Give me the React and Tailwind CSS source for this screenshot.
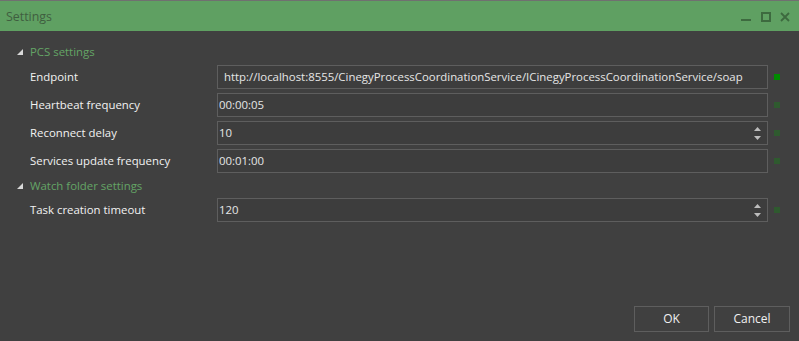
import React from 'react';

const font = { fontFamily: '"Open Sans", "Noto Sans", sans-serif' };

const Triangle = () => (
  <svg width="6" height="6" viewBox="0 0 6 6" className="mr-[7px]">
    <polygon points="6,0 6,6 0,6" fill="#d8d8d8" />
  </svg>
);

const Spinner = () => (
  <div className="flex flex-col items-center gap-[5px] mr-[6px]">
    <svg width="7" height="4" viewBox="0 0 7 4"><polygon points="3.5,0 7,4 0,4" fill="#bdbdbd" /></svg>
    <svg width="7" height="4" viewBox="0 0 7 4"><polygon points="0,0 7,0 3.5,4" fill="#bdbdbd" /></svg>
  </div>
);

const Row = ({ label, value, spin, pad, active }) => (
  <div className="flex items-center h-[28px]">
    <div className="w-[217px] pl-[30px] text-[11.4px] text-[#f2f2f2]">{label}</div>
    <div className="w-[551px] h-[24px] border border-[#5e5e5e] bg-[#3d3d3d] flex items-center">
      <span className={`flex-1 text-[11.4px] text-[#e6e6e6] ${pad ? 'pl-[6px]' : 'pl-[1px]'}`}>{value}</span>
      {spin && <Spinner />}
    </div>
    <div className={`ml-[6px] w-[6px] h-[6px] ${active ? 'bg-[#008a00]' : 'bg-[#2f5a2f]'}`} />
  </div>
);

const Header = ({ children, short }) => (
  <div className={`flex items-center pl-[17px] ${short ? 'h-[21px]' : 'h-[22px]'}`}>
    <Triangle />
    <span className="text-[11.4px] text-[#64a566]">{children}</span>
  </div>
);

export default function App() {
  return (
    <div style={font} className="w-[799px] h-[341px] bg-[#404040] flex flex-col border-t border-[#707070] overflow-hidden">
      {/* Title bar */}
      <div className="h-[30px] bg-[#5fa062] flex items-center justify-between px-[6px] pt-[2px]">
        <span className="text-[12.4px] text-[#3f5e40]">Settings</span>
        <div className="flex items-center gap-[9px] pr-[3px]">
          <svg width="11" height="11" viewBox="0 0 11 11"><rect x="0" y="7" width="10" height="2" fill="#3d6a3f" /></svg>
          <svg width="10" height="10" viewBox="0 0 10 10"><rect x="1" y="1" width="8" height="8" fill="none" stroke="#3d6a3f" strokeWidth="2" /></svg>
          <svg width="10" height="10" viewBox="0 0 10 10"><path d="M1 1 L9 9 M9 1 L1 9" stroke="#3d6a3f" strokeWidth="1.8" /></svg>
        </div>
      </div>

      {/* Content */}
      <div className="flex-1 flex flex-col pt-[10px]">
        <Header>PCS settings</Header>
        <Row label="Endpoint" value="http://localhost:8555/CinegyProcessCoordinationService/ICinegyProcessCoordinationService/soap" pad active />
        <Row label="Heartbeat frequency" value="00:00:05" />
        <Row label="Reconnect delay" value="10" spin />
        <Row label="Services update frequency" value="00:01:00" />
        <Header short>Watch folder settings</Header>
        <Row label="Task creation timeout" value="120" spin />
      </div>

      {/* Buttons */}
      <div className="flex justify-end gap-[5px] pr-[9px] pb-[9px]">
        <button className="w-[75px] h-[26px] border border-[#5e5e5e] bg-[#404040] text-[12px] text-[#f0f0f0]">OK</button>
        <button className="w-[76px] h-[26px] border border-[#5e5e5e] bg-[#404040] text-[12px] text-[#f0f0f0]">Cancel</button>
      </div>
    </div>
  );
}
